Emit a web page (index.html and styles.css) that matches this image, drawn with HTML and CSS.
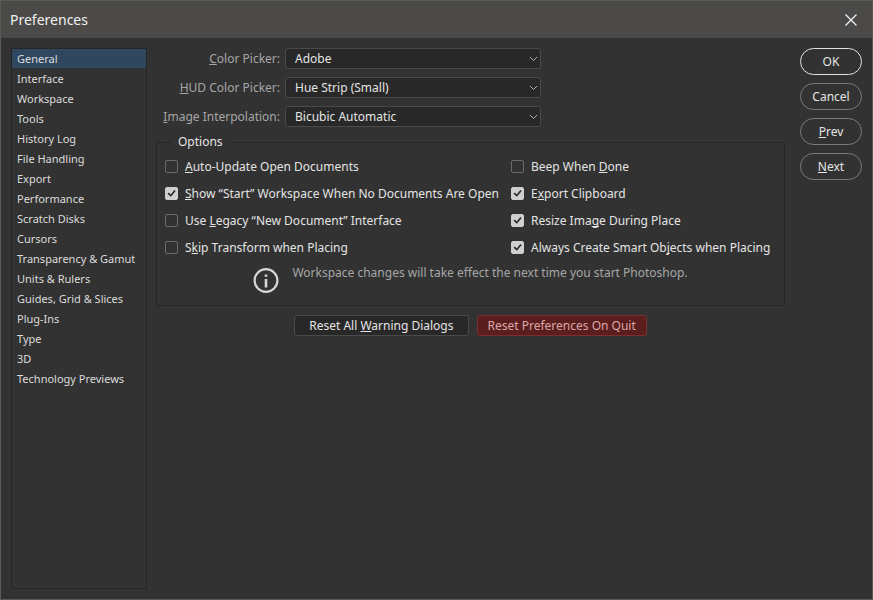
FILE: index.html
```html
<!DOCTYPE html>
<html lang="en">
<head>
  <meta charset="utf-8">
  <meta name="viewport" content="width=device-width, initial-scale=1.0">
  <title>Preferences</title>
  <link rel="stylesheet" href="styles.css">
</head>
<body>
  <div class="dialog">
    <header class="titlebar">
      <h1 class="title">Preferences</h1>
      <button class="close" type="button" aria-label="Close">
        <svg width="14" height="14" viewBox="0 0 14 14">
          <path d="M1.5 1.5l11 11M12.5 1.5l-11 11" fill="none" stroke="#f0f0f0" stroke-width="1.3"/>
        </svg>
      </button>
    </header>

    <div class="content">
      <nav class="sidebar">
        <a class="active" href="#general">General</a>
        <a href="#interface">Interface</a>
        <a href="#workspace">Workspace</a>
        <a href="#tools">Tools</a>
        <a href="#history">History Log</a>
        <a href="#files">File Handling</a>
        <a href="#export">Export</a>
        <a href="#performance">Performance</a>
        <a href="#scratch">Scratch Disks</a>
        <a href="#cursors">Cursors</a>
        <a href="#transparency">Transparency &amp; Gamut</a>
        <a href="#units">Units &amp; Rulers</a>
        <a href="#guides">Guides, Grid &amp; Slices</a>
        <a href="#plugins">Plug-Ins</a>
        <a href="#type">Type</a>
        <a href="#3d">3D</a>
        <a href="#previews">Technology Previews</a>
      </nav>

      <main class="panel">
        <div class="row">
          <label for="picker"><u>C</u>olor Picker:</label>
          <div class="select">
            <select id="picker"><option>Adobe</option></select>
            <svg class="arrow" width="9" height="6" viewBox="0 0 9 6"><path d="M1 1l3.5 3.5L8 1"/></svg>
          </div>
        </div>
        <div class="row">
          <label for="hud"><u>H</u>UD Color Picker:</label>
          <div class="select">
            <select id="hud"><option>Hue Strip (Small)</option></select>
            <svg class="arrow" width="9" height="6" viewBox="0 0 9 6"><path d="M1 1l3.5 3.5L8 1"/></svg>
          </div>
        </div>
        <div class="row">
          <label for="interpolation"><u>I</u>mage Interpolation:</label>
          <div class="select">
            <select id="interpolation"><option>Bicubic Automatic</option></select>
            <svg class="arrow" width="9" height="6" viewBox="0 0 9 6"><path d="M1 1l3.5 3.5L8 1"/></svg>
          </div>
        </div>

        <fieldset class="options">
          <legend>Options</legend>
          <div class="checks">
            <label><input type="checkbox"><span><u>A</u>uto-Update Open Documents</span></label>
            <label><input type="checkbox"><span>Beep When <u>D</u>one</span></label>
            <label><input type="checkbox" checked><span><u>S</u>how “Start” Workspace When No Documents Are Open</span></label>
            <label><input type="checkbox" checked><span>E<u>x</u>port Clipboard</span></label>
            <label><input type="checkbox"><span>Use <u>L</u>egacy “New Document” Interface</span></label>
            <label><input type="checkbox" checked><span>Resize Ima<u>g</u>e During Place</span></label>
            <label><input type="checkbox"><span>S<u>k</u>ip Transform when Placing</span></label>
            <label><input type="checkbox" checked><span>Always Create Smart Ob<u>j</u>ects when Placing</span></label>
          </div>
          <div class="note">
            <svg width="26" height="26" viewBox="0 0 26 26">
              <circle cx="13" cy="12.5" r="11.4" fill="none" stroke="#d6d6d6" stroke-width="2.2"/>
              <path d="M11.7 6.5h2.6v2.3h-2.6zM11.7 11h2.6v8.6h-2.6z" fill="#d6d6d6"/>
            </svg>
            <p>Workspace changes will take effect the next time you start Photoshop.</p>
          </div>
        </fieldset>

        <div class="resets">
          <button class="btn" type="button">Reset All <u>W</u>arning Dialogs</button>
          <button class="btn btn-danger" type="button">Reset Preferences On Quit</button>
        </div>
      </main>

      <div class="actions">
        <button class="pill pill-default" type="button">OK</button>
        <button class="pill" type="button">Cancel</button>
        <button class="pill" type="button"><u>P</u>rev</button>
        <button class="pill" type="button"><u>N</u>ext</button>
      </div>
    </div>
  </div>
</body>
</html>
```
FILE: styles.css
```css
* {
  box-sizing: border-box;
}
body {
  margin: 0;
  background-color: #323232;
  color: #e4e4e4;
  font-family: "Noto Sans", "Open Sans", sans-serif;
  font-size: 12px;
  line-height: 20px;
}
button,
select {
  font: inherit;
  color: inherit;
  cursor: pointer;
}
u {
  text-underline-offset: 1px;
  text-decoration-skip-ink: none;
}
.dialog {
  display: flex;
  flex-direction: column;
  min-height: 100vh;
  border: 1px solid #5a5a59;
}
.titlebar {
  display: flex;
  align-items: center;
  justify-content: space-between;
  height: 37px;
  padding: 0 14px 0 9px;
  background-color: #4b4a48;
}
.title {
  margin: 0;
  font-size: 14px;
  font-weight: normal;
  color: #f0f0f0;
}
.close {
  display: flex;
  padding: 0;
  border: 0;
  background: none;
}
.content {
  display: flex;
  flex: 1;
  padding: 10px;
}
.sidebar {
  flex: none;
  width: 136px;
  border: 1px solid #262626;
  font-size: 11px;
}
.sidebar a {
  display: block;
  height: 20px;
  padding-left: 5px;
  color: #dcdcdc;
  text-decoration: none;
}
.sidebar .active {
  height: 19px;
  margin-bottom: 1px;
  background-color: #30485f;
}
.panel {
  flex: 1;
  margin: 0 15px 0 9px;
}

/* drop-downs */
.row {
  display: flex;
  align-items: center;
  gap: 5px;
  height: 21px;
  margin-bottom: 8px;
}
.row label {
  width: 124px;
  text-align: right;
  white-space: nowrap;
  color: #a6a6a6;
}
.select {
  position: relative;
  width: 256px;
}
.select select {
  display: block;
  width: 100%;
  height: 21px;
  padding: 0 24px 0 9px;
  border: 1px solid #4a4a4a;
  border-radius: 3px;
  background-color: #282828;
  line-height: 19px;
  appearance: none;
}
.arrow {
  position: absolute;
  top: 8px;
  right: 3px;
  fill: none;
  stroke: #b4b4b4;
  pointer-events: none;
}

/* options group */
.options {
  margin: -3px 0 0;
  padding: 1px 8px 11px;
  border: 1px solid #262626;
}
.options legend {
  margin-left: 6px;
  padding: 0 7px;
}
.checks {
  display: grid;
  grid-template-columns: 346px 1fr;
  grid-auto-rows: 27px;
  white-space: nowrap;
}
.checks label {
  display: flex;
  align-items: center;
  gap: 7px;
}
.checks input {
  flex: none;
  width: 13px;
  height: 13px;
  margin: 0;
  border: 1px solid #6c6c6c;
  border-radius: 2px;
  appearance: none;
}
.checks input:checked {
  border-color: #cfcfcf;
  background-color: #cfcfcf;
}
.checks input:checked::before {
  content: "";
  display: block;
  height: 11px;
  background-color: #282828;
  clip-path: polygon(14% 52%, 26% 40%, 43% 58%, 76% 18%, 88% 28%, 44% 80%);
}
.note {
  display: flex;
  justify-content: center;
  gap: 13px;
  padding-top: 7px;
  color: #a6a6a6;
}
.note p {
  margin: -5px 0 0;
}

/* buttons */
.resets {
  display: flex;
  justify-content: center;
  gap: 8px;
  margin-top: 9px;
}
.btn {
  height: 21px;
  padding: 0 14px;
  border: 1px solid #4a4a4a;
  border-radius: 3px;
  background-color: #282828;
  line-height: 19px;
}
.btn-danger {
  padding: 0 10px;
  border-color: #7c2e2e;
  background-color: #5a1e1e;
  color: #dca8a8;
}
.actions {
  display: flex;
  flex: none;
  flex-direction: column;
  gap: 8px;
  width: 62px;
}
.pill {
  height: 27px;
  padding: 0;
  border: 1px solid #7c7c7c;
  border-radius: 14px;
  background: none;
}
.pill-default {
  border-color: #e4e4e4;
}
```
